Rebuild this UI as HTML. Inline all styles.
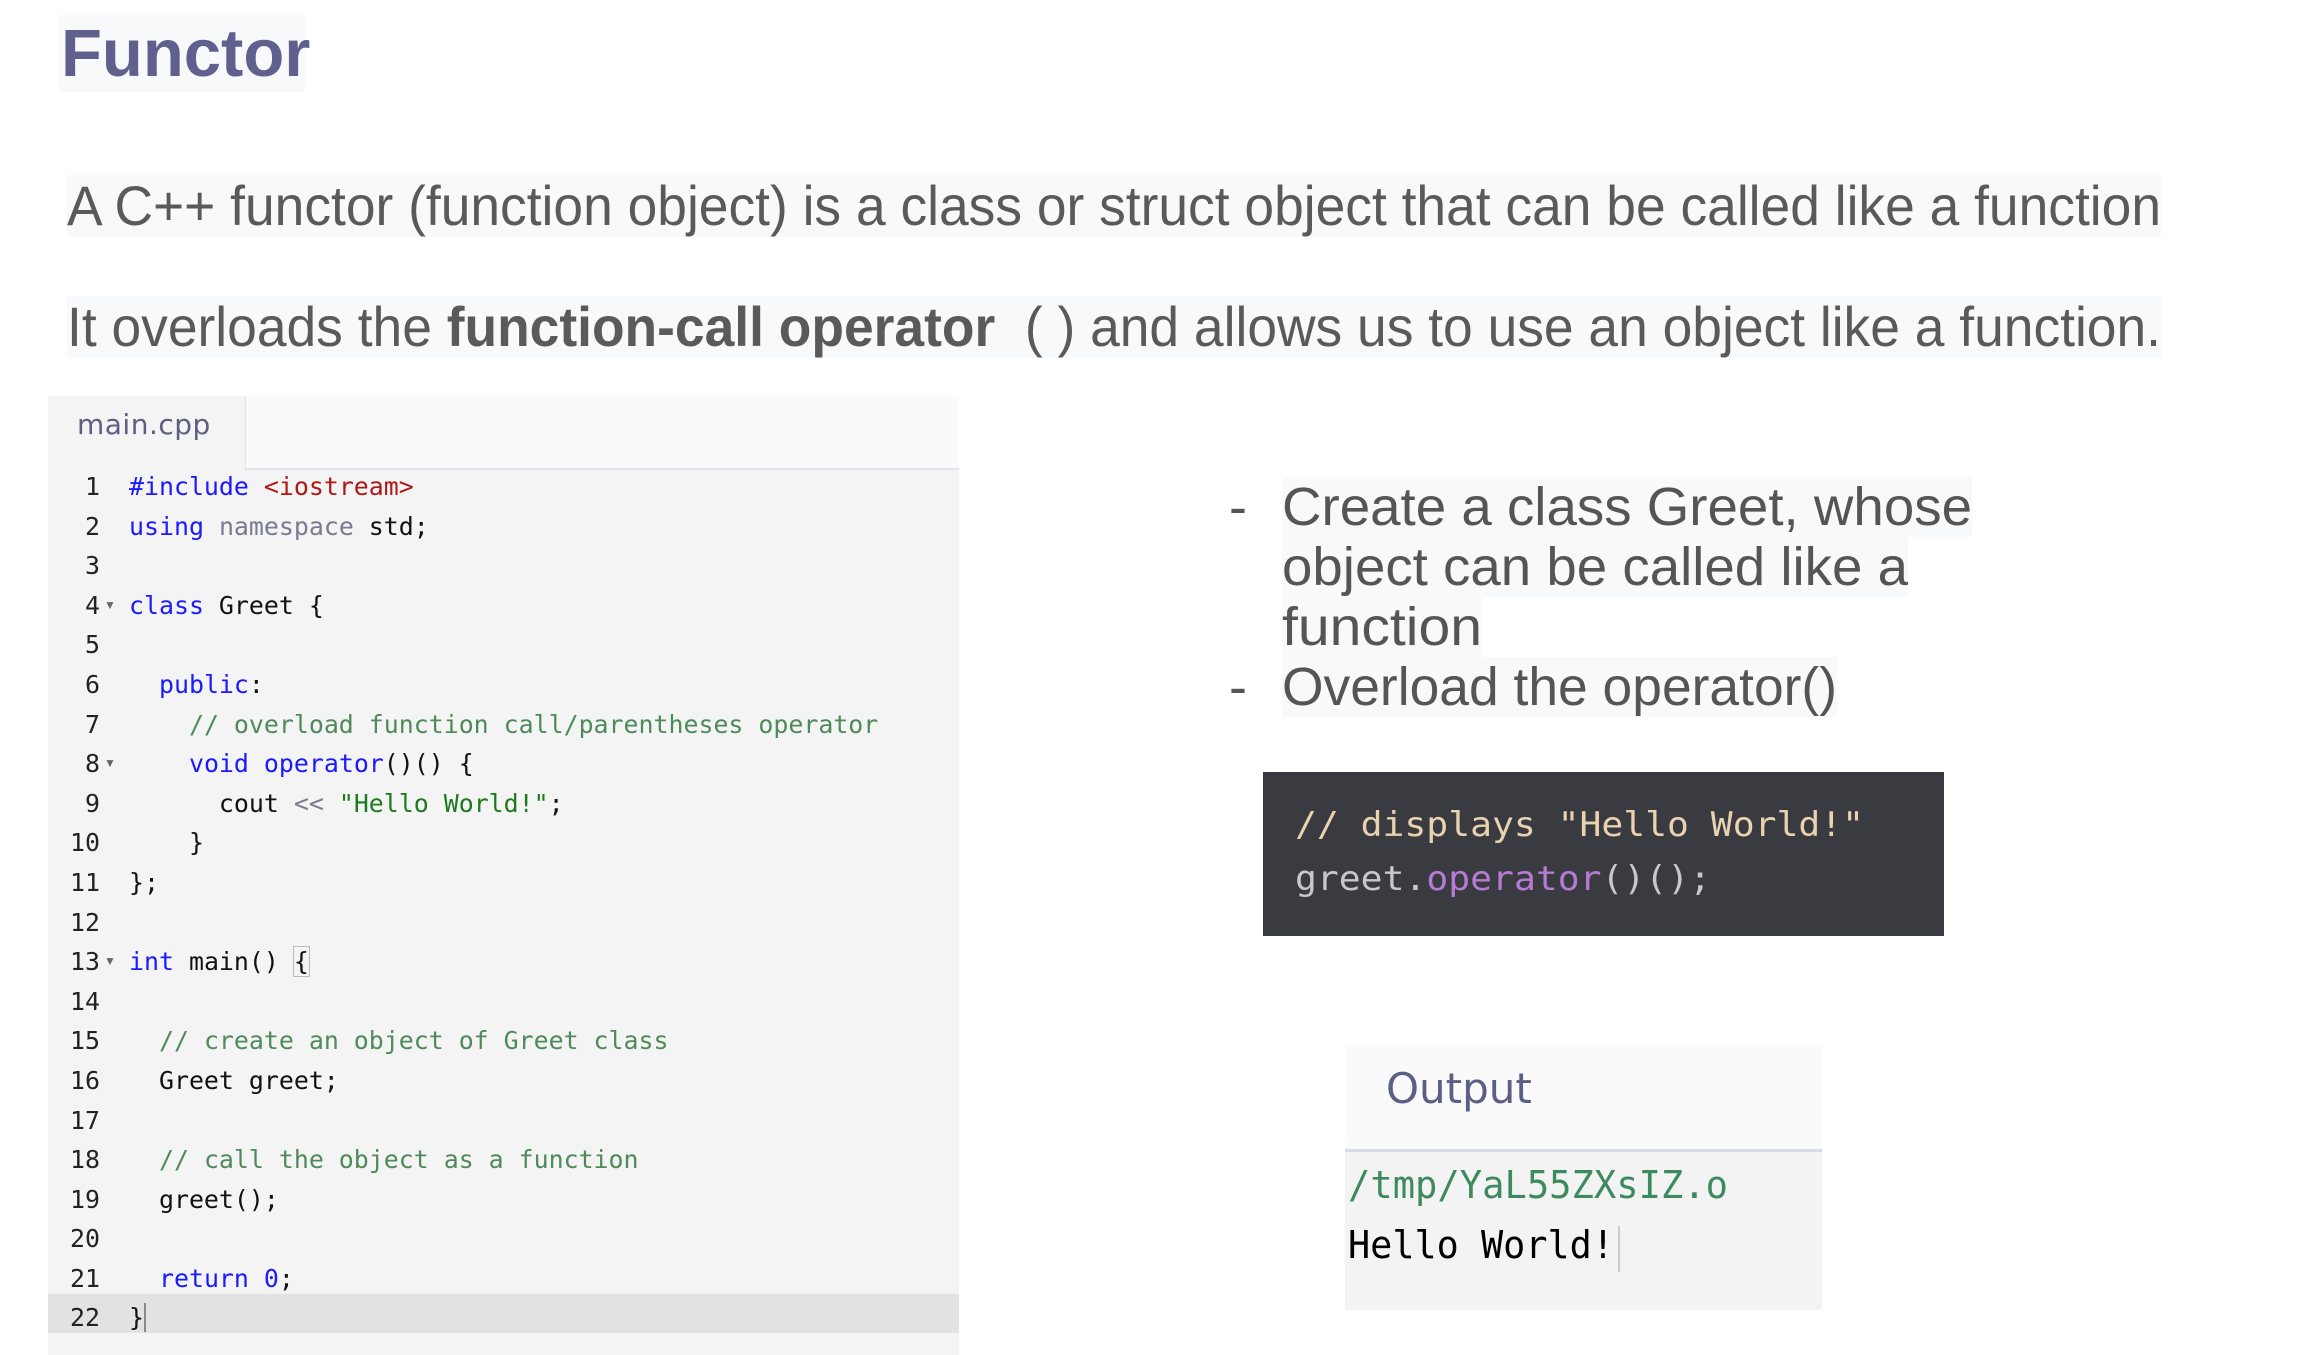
<!DOCTYPE html>
<html><head><meta charset="utf-8">
<style>
*{margin:0;padding:0;box-sizing:border-box}
body{width:2300px;height:1355px;background:#fff;position:relative;overflow:hidden;font-family:"Liberation Sans",Arial,sans-serif}
.abs{position:absolute}
.fit{position:absolute;white-space:nowrap;transform-origin:0 0}
.fit>span{display:inline-block;transform-origin:0 50%}
.hl{background:#f8f9fa}
#title{left:59px;top:15px;width:246px;height:77px;color:#5f608e;font-weight:bold;font-size:67px;line-height:77px;padding-left:2px}
.para{color:#5a5a5a;font-size:56px;line-height:62px;height:62px}
#editor{left:48px;top:396px;width:911px;height:959px;background:#f4f4f4}
#tabbar{left:48px;top:396px;width:911px;height:74px;background:#fafafa;border-bottom:2px solid #e3e6ee}
#tab{left:48px;top:396px;width:198px;height:76px;background:#f4f4f4;border-right:1px solid #e6e6e6}
#tabtxt{left:77px;top:408px;font-size:28px;color:#5c5f80;font-family:"DejaVu Sans",sans-serif;letter-spacing:0.5px}
.code{font-family:"DejaVu Sans Mono","Liberation Mono",monospace;font-size:24.9px;line-height:39.6px;white-space:pre;color:#111}
#nums{left:48px;top:467px;width:52px;text-align:right;color:#222}
#src{left:129px;top:467px}
.k{color:#1a1aff}.s{color:#b01818}.c{color:#4f8a5a}.str{color:#1d7a1d}.g{color:#7a7a90}
#cur{left:48px;top:1294px;width:911px;height:39px;background:#e2e2e2}
.arr{position:absolute;left:104px;font-size:12px;color:#666}
.bul{color:#555;font-size:54px;line-height:60px}
#dark{left:1263px;top:772px;width:681px;height:164px;background:#3a3b40}
.dk{font-family:"DejaVu Sans Mono","Liberation Mono",monospace;font-size:34px;line-height:54px;white-space:pre}
#out{left:1345px;top:1045px;width:477px;height:265px;background:#f3f3f3}
#outh{left:1345px;top:1045px;width:477px;height:107px;background:#fafafa;border-bottom:3px solid #d7dae8}
</style></head><body>
<div id="title" class="abs hl">Functor</div>

<div class="fit para hl" style="left:67px;top:175px;width:2094px"><span>A C++ functor (function object) is a class or struct object that can be called like a function</span></div>
<div class="fit para hl" style="left:67px;top:296px;width:2094px"><span>It overloads the <b>function-call operator</b> &nbsp;( ) and allows us to use an object like a function.</span></div>

<div id="editor" class="abs"></div>
<div id="tabbar" class="abs"></div>
<div id="tab" class="abs"></div>
<div id="tabtxt" class="abs">main.cpp</div>
<div id="cur" class="abs"></div>
<div id="nums" class="abs code">1
2
3
4
5
6
7
8
9
10
11
12
13
14
15
16
17
18
19
20
21
22</div>
<div class="arr" style="top:598px">▼</div>
<div class="arr" style="top:756px">▼</div>
<div class="arr" style="top:954px">▼</div>
<div id="src" class="abs code"><span class="k">#include</span> <span class="s">&lt;iostream&gt;</span>
<span class="k">using</span> <span class="g">namespace</span> std;

<span class="k">class</span> Greet {

  <span class="k">public</span>:
    <span class="c">// overload function call/parentheses operator</span>
    <span class="k">void</span> <span class="k">operator</span>()() {
      cout <span class="g">&lt;&lt;</span> <span class="str">"Hello World!"</span>;
    }
};

<span class="k">int</span> main() <span style="outline:1px solid #bbb">{</span>

  <span class="c">// create an object of Greet class</span>
  Greet greet;

  <span class="c">// call the object as a function</span>
  greet();

  <span class="k">return</span> <span class="k">0</span>;
<span style="border-right:2px solid #888">}</span></div>

<div class="abs bul" style="left:1229px;top:477px">-</div>
<div class="abs bul" style="left:1229px;top:657px">-</div>
<div class="fit bul hl" style="left:1282px;top:477px;width:690px;height:60px"><span>Create a class Greet, whose</span></div>
<div class="fit bul hl" style="left:1282px;top:537px;width:626px;height:60px"><span>object can be called like a</span></div>
<div class="fit bul hl" style="left:1282px;top:597px;width:200px;height:60px"><span>function</span></div>
<div class="fit bul hl" style="left:1282px;top:657px;width:555px;height:60px"><span>Overload the operator()</span></div>

<div id="dark" class="abs"></div>
<div class="fit dk" style="left:1295px;top:798px;width:569px;color:#e8d2b0"><span>// displays "Hello World!"</span></div>
<div class="fit dk" style="left:1295px;top:852px;width:416px;color:#c8c8c8"><span>greet.<span style="color:#b67bd4">operator</span>()();</span></div>

<div id="out" class="abs"></div>
<div id="outh" class="abs"></div>
<div class="abs" style="left:1386px;top:1064px;font-size:42px;color:#5c5f85;font-family:'DejaVu Sans',sans-serif">Output</div>
<div class="fit dk" style="left:1348px;top:1158px;width:380px;color:#3e8a5f;font-size:38px"><span>/tmp/YaL55ZXsIZ.o</span></div>
<div class="fit dk" style="left:1348px;top:1218px;width:266px;color:#000;font-size:38px"><span>Hello World!</span></div>
<div class="abs" style="left:1618px;top:1226px;width:2px;height:46px;background:#ccc"></div>

<script>
document.querySelectorAll('.fit').forEach(function(el){
  var s=el.firstElementChild;var w=parseFloat(el.style.width);
  var cw=s.getBoundingClientRect().width;
  if(cw>0&&w){s.style.transform='scaleX('+(w/cw)+')';}
});
</script>
</body></html>
